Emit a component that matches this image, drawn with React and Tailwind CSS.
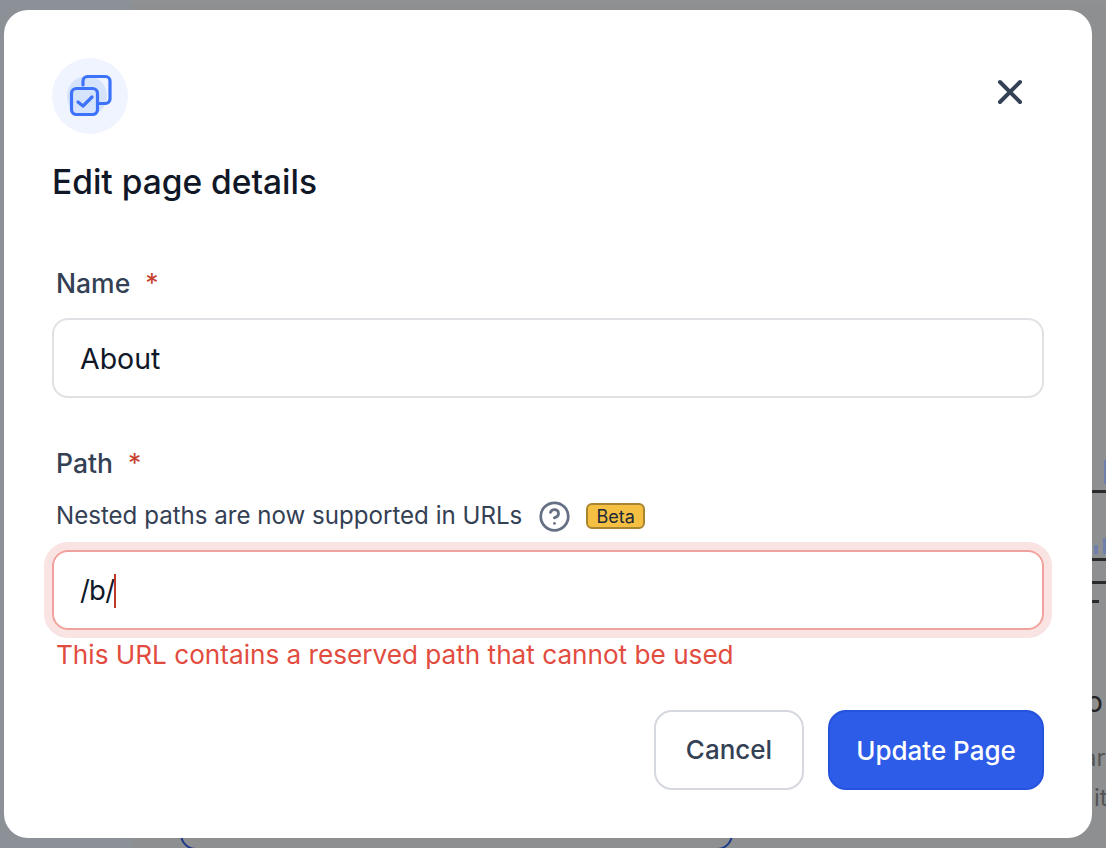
import React from 'react';
import { CircleHelp } from 'lucide-react';

const font = { fontFamily: 'Inter, sans-serif' };

const PageIcon = () => (
  <div className="w-[76px] h-[76px] rounded-full bg-[#eff4ff] shrink-0">
    <svg width="76" height="76" viewBox="0 0 76 76" fill="none">
      <circle cx="35" cy="38" r="20" fill="#d6e3fd" />
      <rect x="19.5" y="30.5" width="26" height="26" rx="5" fill="#d6e3fd" />
      <path d="M31 27v-4a4.5 4.5 0 0 1 4.500-4.500h18a4.500 4.500 0 0 1 4.500 4.500v18a4.500 4.500 0 0 1-4.500 4.500H47" stroke="#3d72fb" strokeWidth="3.2" strokeLinecap="round" strokeLinejoin="round" />
      <rect x="19.5" y="30.5" width="26" height="26" rx="5" stroke="#3d72fb" strokeWidth="3.2" />
      <path d="M26 44l5 4 9-9" stroke="#3d72fb" strokeWidth="3.2" strokeLinecap="round" strokeLinejoin="round" />
    </svg>
  </div>
);

const Label = ({ children, gap }) => (
  <label className={`flex items-center px-1 pt-[2px] h-8 text-[26.500px] font-[550] text-[#344054] ${gap}`}>
    {children}
    <span className="text-[#c8402d] font-normal">*</span>
  </label>
);

export default function App() {
  return (
    <div className="relative w-[1106px] h-[848px] overflow-hidden bg-[#8e8f90]" style={font}>
      {/* page behind the overlay */}
      <div className="absolute left-0 top-0 bottom-0 w-[132px] bg-[#8b9197]" />
      <div className="absolute left-[132px] right-0 top-0 h-[5px] bg-[#909192]" />
      <div className="absolute left-[180px] top-[800px] w-[553px] h-[50px] rounded-[16px] border-2 border-[#1e3a8a]" />
      <div className="absolute left-[1092px] right-0 top-[490px] h-[3px] bg-[#2a2a2a]" />
      <div className="absolute left-[1092px] right-0 top-[558px] h-[3px] bg-[#2a2a2a]" />
      <div className="absolute left-[1092px] right-0 top-[581px] h-[3px] bg-[#2a2a2a]" />
      <div className="absolute left-[1092px] w-[7px] top-[600px] h-[3px] bg-[#2a2a2a]" />
      <div className="absolute left-[1104px] w-[2px] top-[460px] h-[24px] bg-[#6f80ad]" />
      <div className="absolute left-[1094px] w-[4px] top-[545px] h-[9px] bg-[#6f80ad]" />
      <div className="absolute left-[1103px] w-[3px] top-[538px] h-[16px] bg-[#6f80ad]" />
      <div className="absolute left-[1086px] top-[686px] text-[28px] leading-8 text-[#222]">o</div>
      <div className="absolute left-[1083px] top-[742px] text-[24px] leading-8 text-[#555]">ar</div>
      <div className="absolute left-[1094px] top-[782px] text-[24px] leading-8 text-[#555]">it</div>

      {/* modal */}
      <div className="absolute left-[4px] top-[10px] w-[1088px] h-[828px] rounded-[24px] bg-white p-12 flex flex-col">
        <div className="flex items-start justify-between">
          <PageIcon />
          <button className="mt-[20px] mr-[20px] text-[#344054]">
            <svg width="28" height="28" viewBox="0 0 28 28" fill="none" stroke="currentColor" strokeWidth="4" strokeLinecap="round">
              <path d="M4 4l20 20M24 4L4 24" />
            </svg>
          </button>
        </div>

        <h2 className="mt-[28px] h-10 text-[33.500px] leading-10 font-[550] text-[#101828]">Edit page details</h2>

        <div className="mt-[65px]">
          <Label gap="gap-[15px]">Name</Label>
        </div>
        <div className="mt-[19px] h-20 rounded-2xl border-2 border-[#e0e1e4] flex items-center px-[26px] pt-[2px] text-[28.500px] text-[#101828]">
          About
        </div>

        <div className="mt-[49px]">
          <Label gap="gap-[15px]">Path</Label>
        </div>
        <div className="mt-[21px] h-8 px-1 flex items-center text-[24.100px] text-[#344054]">
          <span>Nested paths are now supported in URLs</span>
          <CircleHelp size={33} strokeWidth={2} className="ml-[16px] text-[#667085]" />
          <span className="ml-[15px] h-[26px] w-[59px] rounded-md border-2 border-[#a9852f] bg-[#f5bf42] flex items-center justify-center text-[18px] text-[#1d2939]">
            Beta
          </span>
        </div>
        <div className="mt-[18px] h-20 rounded-2xl border-2 border-[#f2a29c] ring-8 ring-[#fae4e3] flex items-center px-[26px] pt-[2px] text-[27.500px] tracking-[-0.800px] text-[#101828]">
          /b/
          <span className="w-[2px] h-[34px] bg-[#c0392b]" />
        </div>
        <p className="mt-[9px] h-8 px-1 text-[26.150px] leading-8 text-[#e24c3f]">This URL contains a reserved path that cannot be used</p>

        <div className="mt-auto flex justify-end gap-6">
          <button className="w-[150px] h-20 rounded-[18px] border-2 border-[#d5d8de] bg-white pb-[2px] text-[26px] font-[550] text-[#344054]">Cancel</button>
          <button className="w-[216px] h-20 rounded-[18px] border-2 border-[#2653de] bg-[#2d5ce8] text-[26px] font-[550] text-white">Update Page</button>
        </div>
      </div>
    </div>
  );
}
